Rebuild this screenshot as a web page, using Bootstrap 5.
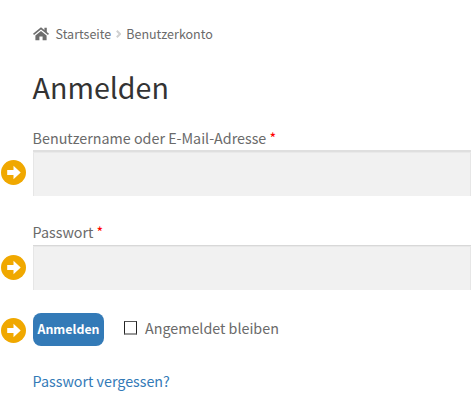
<!DOCTYPE html>
<html lang="de">
<head>
<meta charset="utf-8">
<meta name="viewport" content="width=device-width, initial-scale=1">
<title>Anmelden</title>
<link rel="stylesheet" href="https://cdn.jsdelivr.net/npm/bootstrap@5.3.0/dist/css/bootstrap.min.css">
<style>
body { font-family: "Noto Sans CJK SC", "Open Sans", sans-serif; font-size: 14.3px; line-height: 24px; color: #6a6a6a; background: #fff; overflow: hidden; }
.login-page { width: 471px; padding-top: 22px; }
.indent { padding-left: 32.6px; }
.crumbs { font-size: 12.5px; height: 24px; }
.crumbs .house { margin-right: 7px; }
.crumbs .chevron { margin: 0 5px; }
.page-title { font-size: 28.6px; line-height: 40px; font-weight: 400; color: #333; margin: 21px 0 0; height: 40px; }
.user-row { padding-top: 19px; }
.pass-row { padding-top: 24px; }
.field-label { height: 24px; margin: 0; white-space: nowrap; }
.pass-row .field-label { height: 25px; }
.required-star { color: #f00; }
.marker { width: 33px; padding-left: 1px; flex: none; line-height: 0; }
.user-field .marker { padding-bottom: 1px; }
.login-input { height: 46px; border: 0; border-radius: 0; background: #f1f1f1; box-shadow: inset 0 2px 0 #dfdfdf, inset 0 3px 0 #e9e9e9, inset 1px 0 0 #e6e6e6, inset -1px 0 0 #e6e6e6; }
.login-input.short { height: 45px; box-shadow: inset 0 1px 0 #d8d8d8, inset 0 2px 0 #e8e8e8, inset 1px 0 0 #e6e6e6, inset -1px 0 0 #e6e6e6; }
.actions { padding-top: 23px; }
.actions .marker { padding-top: 2px; }
.login-btn { width: 71px; height: 33px; padding: 0; border: 0; border-radius: 8px; background: #337ab7; color: #fff; font-size: 12.4px; font-weight: 700; line-height: 33px; }
.remember-box { width: 13px; height: 14px; margin: 0 8px 3px 20px; border: 1px solid #222; border-top: 1px solid #555; border-bottom: 2px solid #999; border-radius: 0; flex: none; appearance: none; background: #fff; }
.remember-label { margin-bottom: 3px; }
.lost-row { padding-top: 23px; }
.lost { color: #337ab7; }
</style>
<script src="https://cdn.jsdelivr.net/npm/bootstrap@5.3.0/dist/js/bootstrap.bundle.min.js"></script>
</head>
<body>
<svg class="d-none" xmlns="http://www.w3.org/2000/svg">
  <symbol id="arrow" viewBox="0 0 25 25"><circle cx="12.5" cy="12.5" r="12.5" fill="#f0a800"/><path d="M6.2 10h6.3V5.8l7.2 6.7-7.2 6.8V15H6.2z" fill="#fff"/></symbol>
</svg>
<main class="login-page">
  <nav class="crumbs indent d-flex align-items-center">
    <svg class="house" width="16" height="14" viewBox="0 0 16 14" fill="#6d6d6d"><path d="M8 4 2.4 8.5V13.2h4V9.4h3.2v3.8h4V8.5z"/><path d="M.5 7.4 8 1.3l7.5 6.1" fill="none" stroke="#6d6d6d" stroke-width="1.7"/><path d="M11.4.8h2.4v5l-2.4-1.8z"/></svg>
    <span class="crumb-home">Startseite</span>
    <svg class="chevron" width="5" height="8" viewBox="0 0 5 8"><path d="M.8.8 4 4 .8 7.2" fill="none" stroke="#d0d0d0" stroke-width="2"/></svg>
    <span class="crumb-here">Benutzerkonto</span>
  </nav>
  <h1 class="page-title indent">Anmelden</h1>
  <form>
    <div class="indent user-row"><label class="field-label d-block" for="user"><span>Benutzername oder E-Mail-Adresse</span> <span class="required-star">*</span></label></div>
    <div class="user-field d-flex align-items-center">
      <span class="marker"><svg width="25" height="25"><use href="#arrow"/></svg></span>
      <input id="user" type="text" class="form-control login-input">
    </div>
    <div class="indent pass-row"><label class="field-label d-block" for="pass"><span>Passwort</span> <span class="required-star">*</span></label></div>
    <div class="d-flex align-items-center">
      <span class="marker"><svg width="25" height="25"><use href="#arrow"/></svg></span>
      <input id="pass" type="password" class="form-control login-input short">
    </div>
    <div class="actions d-flex align-items-center">
      <span class="marker"><svg width="25" height="25"><use href="#arrow"/></svg></span>
      <button type="button" class="btn login-btn">Anmelden</button>
      <input id="keep" type="checkbox" class="remember-box"><label class="remember-label" for="keep">Angemeldet bleiben</label>
    </div>
    <div class="indent lost-row"><a class="lost text-decoration-none" href="#">Passwort vergessen?</a></div>
  </form>
</main>
</body>
</html>
